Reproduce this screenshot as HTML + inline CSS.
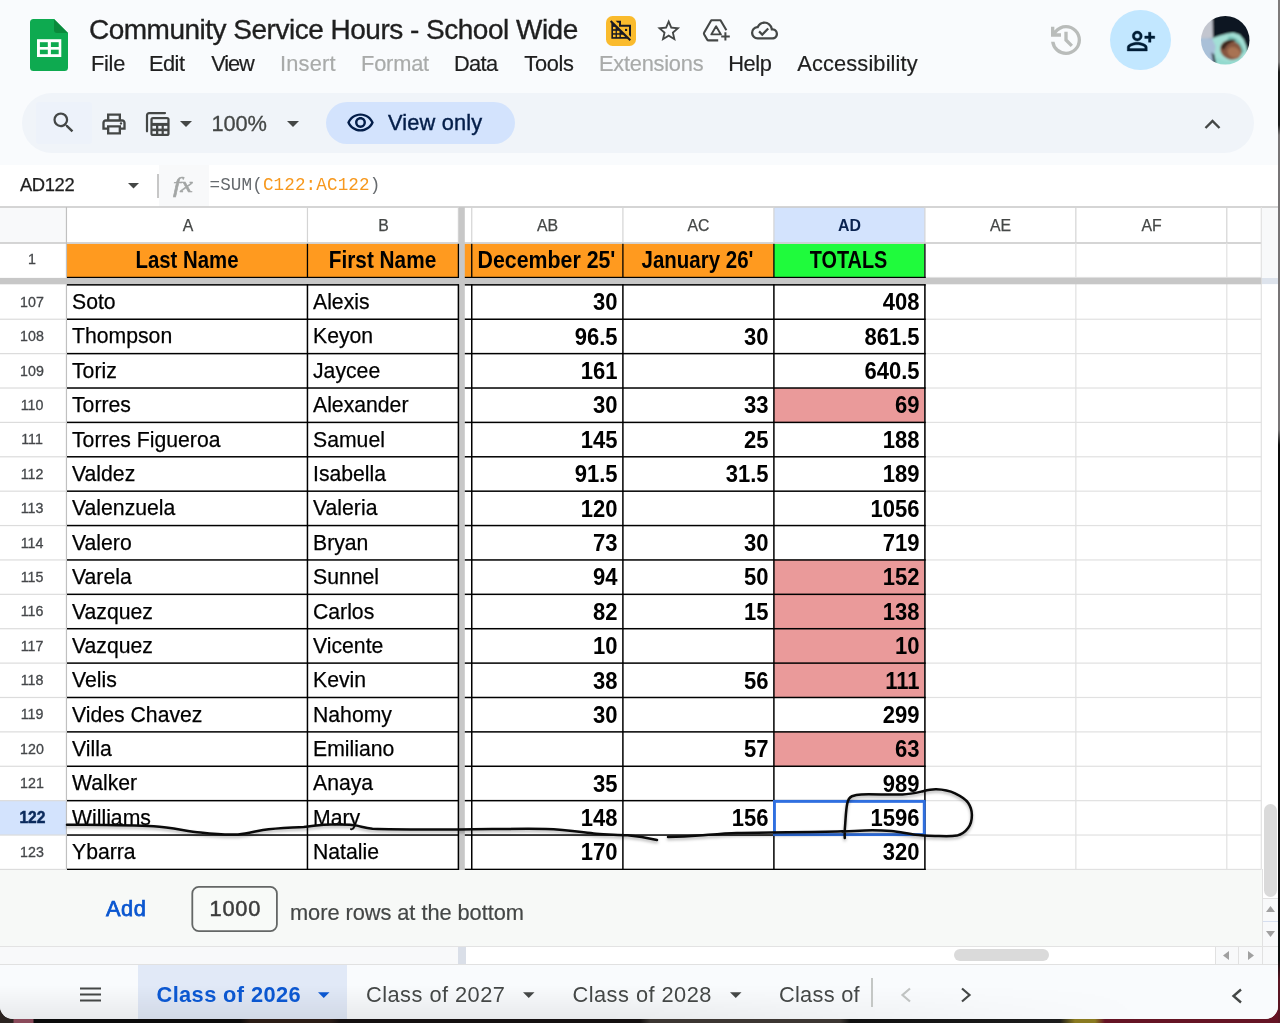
<!DOCTYPE html>
<html lang="en"><head><meta charset="utf-8"><title>Community Service Hours - School Wide</title>
<style>
*{box-sizing:border-box;margin:0;padding:0}
html,body{width:1280px;height:1023px;overflow:hidden;background:#0c0b0b}
body{background:linear-gradient(90deg,#2b2320 0,#2b2320 13px,#8a4a5a 14px,#8a4a5a 33px,#0b0b0b 34px,#0b0b0b 240px,#2a1c16 250px,#2a1c16 330px,#141010 340px,#141010 640px,#3c3632 650px,#3c3632 840px,#101010 850px,#1c1c1c 1060px,#8a7a20 1075px,#8a7a20 1095px,#651424 1105px,#651424 1280px)}
body{font-family:"Liberation Sans",sans-serif;color:#1f1f1f;position:relative}
.abs,.abs *{position:absolute}
#win{will-change:transform;position:absolute;left:0;top:0;width:1278px;height:1019px;background:#f9fbfd;border-radius:0 0 13px 13px;overflow:hidden}
#edge{position:absolute;left:1278px;top:0;width:2px;height:1023px;background:linear-gradient(180deg,#7d7a7a 0,#7d7a7a 62px,#1a1a1a 72px,#1a1a1a 125px,#777475 135px,#777475 430px,#0c0c0c 445px,#0c0c0c 960px,#5a1522 980px,#5a1522 1023px)}
.t{position:absolute;white-space:nowrap;line-height:1}
.menu{font-size:21.8px;top:53.2px;color:#1f1f1f;-webkit-text-stroke:0.200px}
.menu.dis{color:#a9abaa}
.ln{position:absolute;background:#e1e1e1}
.bk{position:absolute;background:#000}
.cell{position:absolute;white-space:nowrap;line-height:1;font-size:22.8px;color:#000;transform-origin:0 0}
.nm{transform:scaleX(0.93);-webkit-text-stroke:0.250px #000}
.num{text-align:right;font-weight:bold;font-size:24.2px;transform:scaleX(0.91);transform-origin:100% 0}
.rh{position:absolute;left:-1.4px;width:66px;text-align:center;font-size:14.8px;color:#44474a;line-height:1;transform:scaleX(0.962);-webkit-text-stroke:0.300px}
.ch{position:absolute;top:216.6px;margin-left:0.7px;text-align:center;font-size:16.4px;color:#444746;line-height:1;transform:scaleX(0.965);-webkit-text-stroke:0.250px}
.hd{position:absolute;top:249.3px;text-align:center;font-weight:bold;font-size:23.2px;color:#000;line-height:1;white-space:nowrap}
svg{position:absolute;overflow:visible}
</style></head><body>
<div id="win">
<!-- sheets logo -->
<svg style="left:30.300px;top:19px" width="38" height="52" viewBox="0 0 38 52">
<path d="M3.500 0H24L38 14V48.500a3.500 3.500 0 0 1-3.500 3.500H3.500a3.500 3.500 0 0 1-3.500-3.500V3.500a3.500 3.500 0 0 1 3.500-3.500z" fill="#0eaa50"/>
<path d="M24 0L38 14H27a3 3 0 0 1-3-3z" fill="#0a8a3c"/>
<path d="M7 20.200h24.300v17.800H7z" fill="#fff"/>
<g fill="#0eaa50"><rect x="9.900" y="23.200" width="7.900" height="4.800"/><rect x="20.900" y="23.200" width="7.800" height="4.800"/><rect x="9.900" y="30.700" width="7.900" height="4.500"/><rect x="20.900" y="30.700" width="7.800" height="4.500"/></g>
</svg>
<div class="t" id="title" style="left:89px;top:16.3px;font-size:28px;color:#1f1f1f;letter-spacing:-0.5px;-webkit-text-stroke:0.350px #1f1f1f">Community Service Hours - School Wide</div>
<div class="t menu" id="m1" style="left:91px;letter-spacing:-0.27px">File</div>
<div class="t menu" id="m2" style="left:149px;letter-spacing:-0.53px">Edit</div>
<div class="t menu" id="m3" style="left:211.3px;letter-spacing:-1.17px">View</div>
<div class="t menu dis" id="m4" style="left:280px;letter-spacing:0.22px">Insert</div>
<div class="t menu dis" id="m5" style="left:361px;letter-spacing:-0.17px">Format</div>
<div class="t menu" id="m6" style="left:454px;letter-spacing:-0.68px">Data</div>
<div class="t menu" id="m7" style="left:524.3px;letter-spacing:-0.3px">Tools</div>
<div class="t menu dis" id="m8" style="left:599px;letter-spacing:-0.23px">Extensions</div>
<div class="t menu" id="m9" style="left:728.2px;letter-spacing:-0.37px">Help</div>
<div class="t menu" id="m10" style="left:797.3px;letter-spacing:0.14px">Accessibility</div>
<!-- external badge -->
<div style="position:absolute;left:605.600px;top:15.600px;width:30px;height:30px;border-radius:6.500px;background:#fabb2d"></div>
<svg style="left:602px;top:12px" width="38" height="38" viewBox="0 0 38 38">
<path d="M9.400 10.200V26.700H26.100z" fill="#191a24"/>
<g fill="#fbbc2c"><rect x="11" y="14.900" width="2.600" height="2.300"/><rect x="11" y="18.800" width="2.600" height="2.400"/><rect x="14.900" y="18.800" width="2.600" height="2.400"/><rect x="11" y="22.700" width="2.600" height="2.400"/><rect x="14.900" y="22.700" width="2.600" height="2.400"/><path d="M18.900 22.700H21.300L23.400 25.100H18.900z"/></g>
<path d="M8.700 8.900L28.300 28.300" stroke="#191a24" stroke-width="2.100" fill="none"/>
<path d="M13.700 8.800H19V12.700H29V24.900L27 23V14.700H17V10.800H15.700z" fill="#191a24"/>
<rect x="23" y="16.900" width="2.100" height="2.100" fill="#191a24"/>
</svg>
<!-- star -->
<svg style="left:654.800px;top:16.900px" width="27.400" height="27.400" viewBox="0 0 24 24" fill="#444746">
<path d="M22 9.24l-7.19-.62L12 2 9.19 8.63 2 9.24l5.46 4.73L5.82 21 12 17.27 18.18 21l-1.63-7.03L22 9.24zM12 15.4l-3.76 2.27 1-4.28-3.32-2.88 4.38-.38L12 6.100l1.710 4.040 4.380.380-3.320 2.880 1 4.280L12 15.400z"/>
</svg>
<!-- drive add -->
<svg style="left:700px;top:15px" width="34" height="30" viewBox="700 15 34 30" fill="none" stroke="#444746" stroke-width="2.100" stroke-linejoin="round" stroke-linecap="butt">
<path d="M726.400 30.200L720.500 20.200H711.300L704.200 32.600a2 2 0 0 0 0 2L707.200 39.600a1.600 1.600 0 0 0 1.400 .8H718.200"/>
<path d="M716.100 26.200L711.300 34.400H720.900z" stroke-width="1.900"/>
<path d="M725.400 32.200v8.400M721.200 36.400h8.600" stroke-width="2"/>
</svg>
<!-- cloud done -->
<svg style="left:750.700px;top:17.400px" width="27" height="27" viewBox="0 0 24 24" fill="#444746">
<path d="M19.35 10.04A7.49 7.49 0 0 0 12 4C9.11 4 6.6 5.64 5.35 8.04A5.994 5.994 0 0 0 0 14c0 3.31 2.69 6 6 6h13c2.76 0 5-2.24 5-5 0-2.64-2.05-4.78-4.65-4.96zM19 18H6c-2.21 0-4-1.790-4-4 0-2.050 1.530-3.760 3.560-3.970l1.070-.11.5-.95A5.469 5.469 0 0 1 12 6c2.620 0 4.880 1.860 5.390 4.430l.3 1.5 1.530.11A2.980 2.980 0 0 1 22 15c0 1.650-1.350 3-3 3zm-9-3.820l-2.090-2.090L6.500 13.500 10 17l6.010-6.010-1.410-1.410z"/>
</svg>
<!-- history -->
<svg style="left:1045.900px;top:19.800px" width="40" height="40" viewBox="0 -960 960 960" fill="#b9bcba">
<path d="M480-120q-138 0-240.500-91.500T122-440h82q14 104 92.500 172T480-200q117 0 198.500-81.500T760-480q0-117-81.500-198.500T480-760q-69 0-129 32t-101 88h110v80H120v-240h80v94q51-64 124.500-99T480-840q75 0 140.500 28.500t114 77q48.500 48.500 77 114T840-480q0 75-28.500 140.500t-77 114q-48.500 48.500-114 77T480-120Zm112-192L440-464v-216h80v184l128 128-56 56Z"/>
</svg>
<!-- share -->
<div style="position:absolute;left:1109.500px;top:9.800px;width:61px;height:60.500px;border-radius:50%;background:#c2e7ff"></div>
<svg style="left:1126px;top:26.300px" width="30" height="30" viewBox="0 0 24 24" fill="#001d35" stroke="#001d35" stroke-width="0.300">
<path d="M9 4a4 4 0 1 0 0 8 4 4 0 0 0 0-8zm0 2a2 2 0 1 1 0 4 2 2 0 0 1 0-4zm0 7c-2.670 0-8 1.340-8 4v3h16v-3c0-2.660-5.330-4-8-4zm6 5H3v-.990C3.200 16.290 6.300 15 9 15s5.800 1.290 6 2zM20 5h-2v3h-3v2h3v3h2v-3h3V8h-3z"/>
</svg>
<!-- avatar -->
<svg style="left:1200.500px;top:16px" width="48.500" height="48.500" viewBox="0 0 48 48">
<defs><clipPath id="av"><circle cx="24" cy="24" r="24"/></clipPath><filter id="bl" x="-10%" y="-10%" width="120%" height="120%"><feGaussianBlur stdDeviation="0.900"/></filter></defs>
<g clip-path="url(#av)"><g filter="url(#bl)">
<rect x="-3" y="-3" width="54" height="54" fill="#0c1322"/>
<path d="M-2 3L11.500 3L11.800 22L-2 24z" fill="#c3c6cf"/>
<path d="M11 22L19 19.300L26.300 17.300L32.200 16.600L38.200 18.600L42.200 23.300L44.900 29.900L46 36L44 50L14 50L10 34z" fill="#a3e0d6"/>
<path d="M-2 22L11 22L14.500 30L12 46L-2 46z" fill="#a9c0d8"/>
<path d="M27 20.500C33 19.500 39.500 24 43 35L40.500 38C38 30 33 25.500 26 24z" fill="#73c0b6"/>
<ellipse cx="29.600" cy="33.600" rx="11" ry="9.300" transform="rotate(25 29.600 33.600)" fill="#875740"/>
<ellipse cx="32.500" cy="36" rx="6.500" ry="5" transform="rotate(25 32.500 36)" fill="#a97352"/>
<path d="M19.500 31C22 24.500 29 22 35 24C30 25.500 25 28.500 22.500 34z" fill="#3a261d"/>
<path d="M15 41C20 43 26 45.800 33 44.800L41 40.500L40 50L12 50z" fill="#93d9ce"/>
<path d="M10.300 36L12.500 50L15.500 50L13.300 38z" fill="#2d3a4a"/>
</g></g></svg>
<div style="position:absolute;left:22px;top:92.500px;width:1232px;height:60px;border-radius:30px;background:#f0f4f9"></div>
<div style="position:absolute;left:36.200px;top:102px;width:55.700px;height:41.800px;border-radius:3px;background:#edf2fa"></div>
<!-- search -->
<svg style="left:49.600px;top:108.700px" width="27.300" height="27.300" viewBox="0 0 24 24" fill="#444746">
<path d="M15.500 14h-.790l-.280-.270A6.471 6.471 0 0 0 16 9.500 6.500 6.500 0 1 0 9.500 16c1.610 0 3.090-.590 4.230-1.570l.270.280v.790l5 4.990L20.490 19zm-6 0C7.010 14 5 11.990 5 9.500S7.010 5 9.500 5 14 7.010 14 9.500 11.990 14 9.500 14z"/>
</svg>
<!-- print -->
<svg style="left:99.800px;top:110.300px" width="28" height="28" viewBox="0 0 24 24" fill="#444746">
<path d="M19 8h-1V3H6v5H5c-1.660 0-3 1.340-3 3v6h4v4h12v-4h4v-6c0-1.660-1.340-3-3-3zM8 5h8v3H8zm8 14H8v-4h8zm2-4v-2H6v2H4v-4c0-.550.450-1 1-1h14c.550 0 1 .450 1 1v4z"/><circle cx="18" cy="11.500" r="1"/>
</svg>
<!-- calc sheet -->
<svg style="left:145px;top:111px" width="26" height="26" viewBox="0 0 26 26">
<path d="M20 2.100H4.200a2.200 2.200 0 0 0-2.200 2.200V20.300" fill="none" stroke="#444746" stroke-width="2.200" stroke-linecap="round"/>
<rect x="5.400" y="6" width="19.200" height="19" rx="2.600" fill="#444746"/>
<g fill="#f0f4f9"><rect x="7.700" y="8.200" width="14.600" height="3.700"/>
<rect x="7.500" y="14.900" width="3.500" height="2.700"/><rect x="13.300" y="14.900" width="3.300" height="2.700"/><rect x="18.800" y="14.900" width="3.500" height="2.700"/>
<rect x="7.500" y="20.200" width="3.500" height="2.600"/><rect x="13.300" y="20.200" width="3.300" height="2.600"/><rect x="18.800" y="20.200" width="3.500" height="2.600"/></g>
</svg>
<svg style="left:179.500px;top:120.500px" width="12" height="6" viewBox="0 0 12 6"><path d="M0 0h12L6 6z" fill="#444746"/></svg>
<div class="t" id="zoom" style="left:211.5px;top:113.300px;font-size:21.8px;letter-spacing:-0.15px;color:#444746;-webkit-text-stroke:0.300px">100%</div>
<svg style="left:287px;top:120.500px" width="12" height="6" viewBox="0 0 12 6"><path d="M0 0h12L6 6z" fill="#444746"/></svg>
<div style="position:absolute;left:326px;top:101.500px;width:189px;height:42px;border-radius:21px;background:#d3e3fd"></div>
<svg style="left:346px;top:108px" width="29" height="29" viewBox="0 0 24 24" fill="#041e49">
<path d="M12 6.500c3.790 0 7.170 2.130 8.820 5.500-1.650 3.370-5.020 5.500-8.820 5.500S4.830 15.370 3.180 12C4.830 8.630 8.210 6.500 12 6.500m0-2C7 4.500 2.730 7.610 1 12c1.730 4.390 6 7.500 11 7.500s9.270-3.110 11-7.500c-1.730-4.390-6-7.500-11-7.500zm0 5a2.500 2.500 0 0 1 0 5 2.500 2.500 0 0 1 0-5m0-2c-2.480 0-4.500 2.020-4.500 4.500s2.020 4.500 4.500 4.500 4.500-2.020 4.500-4.500-2.020-4.500-4.500-4.500z"/>
</svg>
<div class="t" id="vo" style="left:388px;top:112.200px;font-size:21.8px;letter-spacing:0.15px;color:#041e49;font-weight:normal;-webkit-text-stroke:0.400px #041e49">View only</div>
<svg style="left:1204px;top:118px" width="17" height="12" viewBox="0 0 17 12" fill="none" stroke="#444746" stroke-width="2.400"><path d="M1.500 10L8.500 3L15.500 10"/></svg>
<div style="position:absolute;left:0;top:164.500px;width:1278px;height:43px;background:#fff"></div>
<div style="position:absolute;left:159px;top:164.500px;width:50px;height:43px;background:#f8f9fa"></div>
<div class="t" id="cellref" style="left:20px;top:176.300px;font-size:18.400px;color:#1f1f1f;letter-spacing:-0.400px;-webkit-text-stroke:0.250px">AD122</div>
<svg style="left:127.500px;top:182.500px" width="11" height="5.500" viewBox="0 0 12 6"><path d="M0 0h12L6 6z" fill="#444746"/></svg>
<div style="position:absolute;left:157px;top:174px;width:1.500px;height:24px;background:#c7c7c7"></div>
<div class="t" id="fx" style="left:173px;top:174.500px;font-size:21px;font-style:italic;font-family:'Liberation Serif',serif;color:#a3a6a5;-webkit-text-stroke:0.5px #a3a6a5;letter-spacing:-0.5px;transform:scaleX(1.35);transform-origin:0 0">fx</div>
<div class="t" id="formula" style="left:209.500px;top:176.500px;font-size:17.600px;letter-spacing:0.120px;font-family:'Liberation Mono',monospace;color:#666a6e">=SUM(<span style="color:#f7981d;position:static">C122:AC122</span>)</div>
<!-- grid -->
<svg style="left:0;top:0" width="1278" height="1019" viewBox="0 0 1278 1019">
<rect x="0.00" y="207.00" width="1261.30" height="662.43" fill="#fff"/>
<rect x="0.00" y="207.00" width="66.45" height="36.00" fill="#f8f9fa"/>
<rect x="1261.30" y="207.00" width="16.70" height="71.00" fill="#f8f9fa"/>
<rect x="1261.30" y="278.00" width="16.70" height="6.30" fill="#dde3ec"/>
<rect x="1261.30" y="284.30" width="16.70" height="661.70" fill="#fff"/>
<rect x="773.90" y="207.00" width="151.00" height="36.00" fill="#d3e3fd"/>
<rect x="0.00" y="800.66" width="66.45" height="34.39" fill="#d3e3fd"/>
<rect x="67.00" y="243.80" width="706.90" height="33.60" fill="#ff9a1f"/>
<rect x="773.90" y="243.80" width="151.00" height="33.60" fill="#1ffb3c"/>
<rect x="773.90" y="388.01" width="151.00" height="34.39" fill="#ea9a9a"/>
<rect x="773.90" y="559.95" width="151.00" height="34.39" fill="#ea9a9a"/>
<rect x="773.90" y="594.33" width="151.00" height="34.39" fill="#ea9a9a"/>
<rect x="773.90" y="628.72" width="151.00" height="34.39" fill="#ea9a9a"/>
<rect x="773.90" y="663.11" width="151.00" height="34.39" fill="#ea9a9a"/>
<rect x="773.90" y="731.88" width="151.00" height="34.39" fill="#ea9a9a"/>
<rect x="0.00" y="206.20" width="1278.00" height="1.60" fill="#cbcbcb"/>
<rect x="0.00" y="242.20" width="1261.30" height="1.60" fill="#cbcbcb"/>
<rect x="65.85" y="207.00" width="1.20" height="662.43" fill="#c0c0c0"/>
<rect x="306.85" y="207.00" width="1.20" height="36.00" fill="#d4d4d4"/>
<rect x="457.80" y="207.00" width="1.20" height="36.00" fill="#d4d4d4"/>
<rect x="471.15" y="207.00" width="1.20" height="36.00" fill="#d4d4d4"/>
<rect x="622.30" y="207.00" width="1.20" height="36.00" fill="#d4d4d4"/>
<rect x="773.30" y="207.00" width="1.20" height="36.00" fill="#d4d4d4"/>
<rect x="924.30" y="207.00" width="1.20" height="36.00" fill="#d4d4d4"/>
<rect x="1075.25" y="207.00" width="1.20" height="36.00" fill="#d4d4d4"/>
<rect x="1226.20" y="207.00" width="1.20" height="36.00" fill="#d4d4d4"/>
<rect x="924.30" y="243.00" width="1.20" height="626.43" fill="#e1e1e1"/>
<rect x="1075.25" y="243.00" width="1.20" height="626.43" fill="#e1e1e1"/>
<rect x="1226.20" y="243.00" width="1.20" height="626.43" fill="#e1e1e1"/>
<rect x="1260.70" y="207.00" width="1.20" height="662.43" fill="#e1e1e1"/>
<rect x="0.00" y="318.64" width="66.45" height="1.20" fill="#dcdcdc"/>
<rect x="924.90" y="318.64" width="336.40" height="1.20" fill="#e1e1e1"/>
<rect x="0.00" y="353.02" width="66.45" height="1.20" fill="#dcdcdc"/>
<rect x="924.90" y="353.02" width="336.40" height="1.20" fill="#e1e1e1"/>
<rect x="0.00" y="387.41" width="66.45" height="1.20" fill="#dcdcdc"/>
<rect x="924.90" y="387.41" width="336.40" height="1.20" fill="#e1e1e1"/>
<rect x="0.00" y="421.80" width="66.45" height="1.20" fill="#dcdcdc"/>
<rect x="924.90" y="421.80" width="336.40" height="1.20" fill="#e1e1e1"/>
<rect x="0.00" y="456.19" width="66.45" height="1.20" fill="#dcdcdc"/>
<rect x="924.90" y="456.19" width="336.40" height="1.20" fill="#e1e1e1"/>
<rect x="0.00" y="490.57" width="66.45" height="1.20" fill="#dcdcdc"/>
<rect x="924.90" y="490.57" width="336.40" height="1.20" fill="#e1e1e1"/>
<rect x="0.00" y="524.96" width="66.45" height="1.20" fill="#dcdcdc"/>
<rect x="924.90" y="524.96" width="336.40" height="1.20" fill="#e1e1e1"/>
<rect x="0.00" y="559.35" width="66.45" height="1.20" fill="#dcdcdc"/>
<rect x="924.90" y="559.35" width="336.40" height="1.20" fill="#e1e1e1"/>
<rect x="0.00" y="593.73" width="66.45" height="1.20" fill="#dcdcdc"/>
<rect x="924.90" y="593.73" width="336.40" height="1.20" fill="#e1e1e1"/>
<rect x="0.00" y="628.12" width="66.45" height="1.20" fill="#dcdcdc"/>
<rect x="924.90" y="628.12" width="336.40" height="1.20" fill="#e1e1e1"/>
<rect x="0.00" y="662.51" width="66.45" height="1.20" fill="#dcdcdc"/>
<rect x="924.90" y="662.51" width="336.40" height="1.20" fill="#e1e1e1"/>
<rect x="0.00" y="696.89" width="66.45" height="1.20" fill="#dcdcdc"/>
<rect x="924.90" y="696.89" width="336.40" height="1.20" fill="#e1e1e1"/>
<rect x="0.00" y="731.28" width="66.45" height="1.20" fill="#dcdcdc"/>
<rect x="924.90" y="731.28" width="336.40" height="1.20" fill="#e1e1e1"/>
<rect x="0.00" y="765.67" width="66.45" height="1.20" fill="#dcdcdc"/>
<rect x="924.90" y="765.67" width="336.40" height="1.20" fill="#e1e1e1"/>
<rect x="0.00" y="800.06" width="66.45" height="1.20" fill="#dcdcdc"/>
<rect x="924.90" y="800.06" width="336.40" height="1.20" fill="#e1e1e1"/>
<rect x="0.00" y="834.44" width="66.45" height="1.20" fill="#dcdcdc"/>
<rect x="924.90" y="834.44" width="336.40" height="1.20" fill="#e1e1e1"/>
<rect x="0.00" y="868.83" width="66.45" height="1.20" fill="#dcdcdc"/>
<rect x="924.90" y="868.83" width="336.40" height="1.20" fill="#e1e1e1"/>
<rect x="924.90" y="276.90" width="336.40" height="1.00" fill="#e1e1e1"/>
<rect x="0.00" y="277.90" width="1261.30" height="6.40" fill="#c7c7c7"/>
<rect x="458.90" y="207.00" width="5.90" height="663.03" fill="#c7c7c7"/>
<rect x="67.00" y="276.80" width="391.90" height="1.20" fill="#000"/>
<rect x="67.00" y="284.10" width="391.90" height="1.50" fill="#000"/>
<rect x="67.00" y="318.49" width="391.90" height="1.50" fill="#000"/>
<rect x="67.00" y="352.87" width="391.90" height="1.50" fill="#000"/>
<rect x="67.00" y="387.26" width="391.90" height="1.50" fill="#000"/>
<rect x="67.00" y="421.65" width="391.90" height="1.50" fill="#000"/>
<rect x="67.00" y="456.04" width="391.90" height="1.50" fill="#000"/>
<rect x="67.00" y="490.42" width="391.90" height="1.50" fill="#000"/>
<rect x="67.00" y="524.81" width="391.90" height="1.50" fill="#000"/>
<rect x="67.00" y="559.20" width="391.90" height="1.50" fill="#000"/>
<rect x="67.00" y="593.58" width="391.90" height="1.50" fill="#000"/>
<rect x="67.00" y="627.97" width="391.90" height="1.50" fill="#000"/>
<rect x="67.00" y="662.36" width="391.90" height="1.50" fill="#000"/>
<rect x="67.00" y="696.74" width="391.90" height="1.50" fill="#000"/>
<rect x="67.00" y="731.13" width="391.90" height="1.50" fill="#000"/>
<rect x="67.00" y="765.52" width="391.90" height="1.50" fill="#000"/>
<rect x="67.00" y="799.91" width="391.90" height="1.50" fill="#000"/>
<rect x="67.00" y="834.29" width="391.90" height="1.50" fill="#000"/>
<rect x="67.00" y="868.68" width="391.90" height="1.50" fill="#000"/>
<rect x="464.80" y="276.80" width="460.85" height="1.20" fill="#000"/>
<rect x="464.80" y="284.10" width="460.85" height="1.50" fill="#000"/>
<rect x="464.80" y="318.49" width="460.85" height="1.50" fill="#000"/>
<rect x="464.80" y="352.87" width="460.85" height="1.50" fill="#000"/>
<rect x="464.80" y="387.26" width="460.85" height="1.50" fill="#000"/>
<rect x="464.80" y="421.65" width="460.85" height="1.50" fill="#000"/>
<rect x="464.80" y="456.04" width="460.85" height="1.50" fill="#000"/>
<rect x="464.80" y="490.42" width="460.85" height="1.50" fill="#000"/>
<rect x="464.80" y="524.81" width="460.85" height="1.50" fill="#000"/>
<rect x="464.80" y="559.20" width="460.85" height="1.50" fill="#000"/>
<rect x="464.80" y="593.58" width="460.85" height="1.50" fill="#000"/>
<rect x="464.80" y="627.97" width="460.85" height="1.50" fill="#000"/>
<rect x="464.80" y="662.36" width="460.85" height="1.50" fill="#000"/>
<rect x="464.80" y="696.74" width="460.85" height="1.50" fill="#000"/>
<rect x="464.80" y="731.13" width="460.85" height="1.50" fill="#000"/>
<rect x="464.80" y="765.52" width="460.85" height="1.50" fill="#000"/>
<rect x="464.80" y="799.91" width="460.85" height="1.50" fill="#000"/>
<rect x="464.80" y="834.29" width="460.85" height="1.50" fill="#000"/>
<rect x="464.80" y="868.68" width="460.85" height="1.50" fill="#000"/>
<rect x="306.80" y="243.80" width="1.30" height="34.20" fill="#000"/>
<rect x="306.70" y="284.30" width="1.50" height="585.88" fill="#000"/>
<rect x="457.75" y="243.80" width="1.30" height="34.20" fill="#000"/>
<rect x="457.65" y="284.30" width="1.50" height="585.88" fill="#000"/>
<rect x="471.10" y="243.80" width="1.30" height="34.20" fill="#000"/>
<rect x="471.00" y="284.30" width="1.50" height="585.88" fill="#000"/>
<rect x="622.25" y="243.80" width="1.30" height="34.20" fill="#000"/>
<rect x="622.15" y="284.30" width="1.50" height="585.88" fill="#000"/>
<rect x="773.25" y="243.80" width="1.30" height="34.20" fill="#000"/>
<rect x="773.15" y="284.30" width="1.50" height="585.88" fill="#000"/>
<rect x="924.25" y="243.80" width="1.30" height="34.20" fill="#000"/>
<rect x="924.15" y="284.30" width="1.50" height="585.88" fill="#000"/>
</svg>
<div class="ch" style="left:67px;width:240px;">A</div>
<div class="ch" style="left:307px;width:151px;">B</div>
<div class="ch" style="left:471px;width:151px;">AB</div>
<div class="ch" style="left:622px;width:151px;">AC</div>
<div class="ch" style="left:773px;width:151px;font-weight:bold;color:#0a2350;transform:scaleX(0.97);-webkit-text-stroke:0">AD</div>
<div class="ch" style="left:924px;width:151px;">AE</div>
<div class="ch" style="left:1075px;width:151px;">AF</div>
<div class="rh" style="top:252.4px">1</div>
<div class="hd" id="h1" style="left:67px;width:240px;transform:scaleX(0.879)">Last Name</div>
<div class="hd" id="h2" style="left:307px;width:151px;transform:scaleX(0.896)">First Name</div>
<div class="hd" id="h3" style="left:471px;width:151px;transform:scaleX(0.92)">December 25'</div>
<div class="hd" id="h4" style="left:622px;width:151px;transform:scaleX(0.883)">January 26'</div>
<div class="hd" id="h5" style="left:773px;width:151px;transform:scaleX(0.855)">TOTALS</div>
<div class="rh" style="top:294.80px">107</div>
<div class="cell nm" style="left:72.3px;top:290.05px">Soto</div>
<div class="cell nm" style="left:312.5px;top:290.05px">Alexis</div>
<div class="cell num" style="left:471px;width:146.5px;top:290.25px">30</div>
<div class="cell num" style="left:773px;width:146.5px;top:290.25px">408</div>
<div class="rh" style="top:329.19px">108</div>
<div class="cell nm" style="left:72.3px;top:324.44px">Thompson</div>
<div class="cell nm" style="left:312.5px;top:324.44px">Keyon</div>
<div class="cell num" style="left:471px;width:146.5px;top:324.64px">96.5</div>
<div class="cell num" style="left:622px;width:146.5px;top:324.64px">30</div>
<div class="cell num" style="left:773px;width:146.5px;top:324.64px">861.5</div>
<div class="rh" style="top:363.57px">109</div>
<div class="cell nm" style="left:72.3px;top:358.82px">Toriz</div>
<div class="cell nm" style="left:312.5px;top:358.82px">Jaycee</div>
<div class="cell num" style="left:471px;width:146.5px;top:359.02px">161</div>
<div class="cell num" style="left:773px;width:146.5px;top:359.02px">640.5</div>
<div class="rh" style="top:397.96px">110</div>
<div class="cell nm" style="left:72.3px;top:393.21px">Torres</div>
<div class="cell nm" style="left:312.5px;top:393.21px">Alexander</div>
<div class="cell num" style="left:471px;width:146.5px;top:393.41px">30</div>
<div class="cell num" style="left:622px;width:146.5px;top:393.41px">33</div>
<div class="cell num" style="left:773px;width:146.5px;top:393.41px">69</div>
<div class="rh" style="top:432.35px">111</div>
<div class="cell nm" style="left:72.3px;top:427.60px">Torres Figueroa</div>
<div class="cell nm" style="left:312.5px;top:427.60px">Samuel</div>
<div class="cell num" style="left:471px;width:146.5px;top:427.80px">145</div>
<div class="cell num" style="left:622px;width:146.5px;top:427.80px">25</div>
<div class="cell num" style="left:773px;width:146.5px;top:427.80px">188</div>
<div class="rh" style="top:466.74px">112</div>
<div class="cell nm" style="left:72.3px;top:461.99px">Valdez</div>
<div class="cell nm" style="left:312.5px;top:461.99px">Isabella</div>
<div class="cell num" style="left:471px;width:146.5px;top:462.19px">91.5</div>
<div class="cell num" style="left:622px;width:146.5px;top:462.19px">31.5</div>
<div class="cell num" style="left:773px;width:146.5px;top:462.19px">189</div>
<div class="rh" style="top:501.12px">113</div>
<div class="cell nm" style="left:72.3px;top:496.37px">Valenzuela</div>
<div class="cell nm" style="left:312.5px;top:496.37px">Valeria</div>
<div class="cell num" style="left:471px;width:146.5px;top:496.57px">120</div>
<div class="cell num" style="left:773px;width:146.5px;top:496.57px">1056</div>
<div class="rh" style="top:535.51px">114</div>
<div class="cell nm" style="left:72.3px;top:530.76px">Valero</div>
<div class="cell nm" style="left:312.5px;top:530.76px">Bryan</div>
<div class="cell num" style="left:471px;width:146.5px;top:530.96px">73</div>
<div class="cell num" style="left:622px;width:146.5px;top:530.96px">30</div>
<div class="cell num" style="left:773px;width:146.5px;top:530.96px">719</div>
<div class="rh" style="top:569.90px">115</div>
<div class="cell nm" style="left:72.3px;top:565.15px">Varela</div>
<div class="cell nm" style="left:312.5px;top:565.15px">Sunnel</div>
<div class="cell num" style="left:471px;width:146.5px;top:565.35px">94</div>
<div class="cell num" style="left:622px;width:146.5px;top:565.35px">50</div>
<div class="cell num" style="left:773px;width:146.5px;top:565.35px">152</div>
<div class="rh" style="top:604.28px">116</div>
<div class="cell nm" style="left:72.3px;top:599.53px">Vazquez</div>
<div class="cell nm" style="left:312.5px;top:599.53px">Carlos</div>
<div class="cell num" style="left:471px;width:146.5px;top:599.73px">82</div>
<div class="cell num" style="left:622px;width:146.5px;top:599.73px">15</div>
<div class="cell num" style="left:773px;width:146.5px;top:599.73px">138</div>
<div class="rh" style="top:638.67px">117</div>
<div class="cell nm" style="left:72.3px;top:633.92px">Vazquez</div>
<div class="cell nm" style="left:312.5px;top:633.92px">Vicente</div>
<div class="cell num" style="left:471px;width:146.5px;top:634.12px">10</div>
<div class="cell num" style="left:773px;width:146.5px;top:634.12px">10</div>
<div class="rh" style="top:673.06px">118</div>
<div class="cell nm" style="left:72.3px;top:668.31px">Velis</div>
<div class="cell nm" style="left:312.5px;top:668.31px">Kevin</div>
<div class="cell num" style="left:471px;width:146.5px;top:668.51px">38</div>
<div class="cell num" style="left:622px;width:146.5px;top:668.51px">56</div>
<div class="cell num" style="left:773px;width:146.5px;top:668.51px">111</div>
<div class="rh" style="top:707.44px">119</div>
<div class="cell nm" style="left:72.3px;top:702.69px">Vides Chavez</div>
<div class="cell nm" style="left:312.5px;top:702.69px">Nahomy</div>
<div class="cell num" style="left:471px;width:146.5px;top:702.89px">30</div>
<div class="cell num" style="left:773px;width:146.5px;top:702.89px">299</div>
<div class="rh" style="top:741.83px">120</div>
<div class="cell nm" style="left:72.3px;top:737.08px">Villa</div>
<div class="cell nm" style="left:312.5px;top:737.08px">Emiliano</div>
<div class="cell num" style="left:622px;width:146.5px;top:737.28px">57</div>
<div class="cell num" style="left:773px;width:146.5px;top:737.28px">63</div>
<div class="rh" style="top:776.22px">121</div>
<div class="cell nm" style="left:72.3px;top:771.47px">Walker</div>
<div class="cell nm" style="left:312.5px;top:771.47px">Anaya</div>
<div class="cell num" style="left:471px;width:146.5px;top:771.67px">35</div>
<div class="cell num" style="left:773px;width:146.5px;top:771.67px">989</div>
<div class="rh" style="top:810.46px;left:-0.6px;font-weight:bold;font-size:15.6px;color:#0b2a5c;transform:scaleX(1.0);-webkit-text-stroke:0.5px #0b2a5c">122</div>
<div class="cell nm" style="left:72.3px;top:805.86px">Williams</div>
<div class="cell nm" style="left:312.5px;top:805.86px">Mary</div>
<div class="cell num" style="left:471px;width:146.5px;top:806.06px">148</div>
<div class="cell num" style="left:622px;width:146.5px;top:806.06px">156</div>
<div class="cell num" style="left:773px;width:146.5px;top:806.06px">1596</div>
<div class="rh" style="top:844.99px">123</div>
<div class="cell nm" style="left:72.3px;top:840.24px">Ybarra</div>
<div class="cell nm" style="left:312.5px;top:840.24px">Natalie</div>
<div class="cell num" style="left:471px;width:146.5px;top:840.44px">170</div>
<div class="cell num" style="left:773px;width:146.5px;top:840.44px">320</div>
<svg style="left:0;top:0" width="1278" height="1019" viewBox="0 0 1278 1019"><rect x="774.45" y="801.4" width="149.8" height="33.2" fill="none" stroke="#2f6fe0" stroke-width="2.9"/></svg>
<svg style="left:0;top:0" width="1278" height="1019" viewBox="0 0 1278 1019" fill="none" stroke="#0a0a0a" stroke-width="2.500" stroke-linecap="round" stroke-linejoin="round" filter="drop-shadow(0px 2.500px 1.800px rgba(0,0,0,0.300))">
<path d="M67 824.700C100 825 130 825 153.750 826.250C172 827.500 186 831 200.600 832.500C214 834 226 835 238 834.400C248 833.500 254 831.500 263 830C277 828 290 827.800 303.750 826.900C314 826 322 824.300 332 824.400C342 824.500 350 824 357 825.600C363 827 366 828.200 372.500 828.750C400 829.800 430 829.400 460 829.400C490 829.300 520 828.500 546 829C565 829.500 580 832 596 833.750C607 834.800 617 834.500 627.500 835.300C638 836.200 648 838 657 840"/>
<path d="M668 836.900C679 836.800 689 836.400 699 835.600C712 834.600 724 833.400 737 833C770 832 805 832.300 842.500 831.200"/>
<path d="M844.750 837.900C844.500 832 844.800 828 845.300 822.500C845.800 816 846 810 847.200 803.750C848 799.500 849 797.500 851.900 796.250C855 795 858 794.500 861.250 794.400C875 794.100 889 794.800 902.500 794.400C909 794.200 915 793 921.250 791.600C926 790.500 931 789.100 936.250 789.300C943 789.500 949 790.500 955 793.400C961 796.300 965.500 799 968.100 802.800C970.800 806.800 971.900 811 971.900 815C971.900 820 970.800 824.500 968.100 828.100C965.500 831.600 962 834.500 956.900 835.600C951 836.500 944 836.200 938.100 836C930 835.700 922 835.500 915.600 834.700C907 833.600 899 831.600 891.250 831C882 830.300 874 830.200 865 830.400C857 830.600 850 831 842.500 831.500"/>
</svg>
<div style="position:absolute;left:0;top:869.800px;width:1262px;height:76px;background:#f7f9f7"></div>
<div class="t" id="add" style="left:106px;top:897.500px;font-size:21.8px;letter-spacing:0.5px;color:#0b57d0;-webkit-text-stroke:0.750px #0b57d0">Add</div>
<svg style="left:0;top:0" width="400" height="1019" viewBox="0 0 400 1019"><rect x="192.300" y="886.900" width="84.600" height="44.200" rx="6.500" fill="#f8faf8" stroke="#646766" stroke-width="1.800"/></svg>
<div class="t" id="n1000" style="left:209.500px;top:898.300px;font-size:21.8px;letter-spacing:0.8px;-webkit-text-stroke:0.500px;color:#3c3c3c">1000</div>
<div class="t" id="more" style="left:290px;top:901.500px;font-size:21.8px;letter-spacing:-0.05px;-webkit-text-stroke:0.200px;color:#444746">more rows at the bottom</div>
<div class="ln" style="left:0;top:945.500px;width:1278px;height:1.200px;background:#e3e3e3"></div>
<!-- h scrollbar row -->
<div style="position:absolute;left:0;top:946.500px;width:458px;height:17.500px;background:#f8f9fa"></div>
<div style="position:absolute;left:458px;top:946.500px;width:7.500px;height:17.500px;background:#dadfe8"></div>
<div style="position:absolute;left:465.500px;top:946.500px;width:749px;height:17.500px;background:#fff"></div>
<div style="position:absolute;left:954px;top:948.500px;width:95px;height:12.500px;border-radius:6.500px;background:#dadada"></div>
<div style="position:absolute;left:1214.500px;top:946.500px;width:63.500px;height:17.500px;background:#f8f9fa"></div>
<div class="ln" style="left:1214.500px;top:946.500px;width:1px;height:17.500px"></div>
<div class="ln" style="left:1238px;top:946.500px;width:1px;height:17.500px"></div>
<div class="ln" style="left:1261.500px;top:946.500px;width:1px;height:17.500px"></div>
<svg style="left:1223px;top:950.500px" width="6" height="9" viewBox="0 0 6 9"><path d="M6 0v9L0 4.500z" fill="#a0a0a0"/></svg>
<svg style="left:1248px;top:950.500px" width="6" height="9" viewBox="0 0 6 9"><path d="M0 0v9L6 4.500z" fill="#a0a0a0"/></svg>
<div class="ln" style="left:0;top:964px;width:1278px;height:1.200px;background:#e1e1e1"></div>
<!-- v scrollbar -->
<div style="position:absolute;left:1263.500px;top:803.500px;width:13.500px;height:93px;border-radius:7px;background:#dadada"></div>
<div style="position:absolute;left:1262px;top:897.500px;width:16px;height:48px;background:#f8f9fa"></div>
<div class="ln" style="left:1262px;top:897.500px;width:16px;height:1px"></div>
<div class="ln" style="left:1262px;top:921px;width:16px;height:1px;background:#d6dff0"></div>
<div class="ln" style="left:1261.500px;top:869px;width:1px;height:77px"></div>
<svg style="left:1265.500px;top:906px" width="9" height="6" viewBox="0 0 9 6"><path d="M0 6h9L4.500 0z" fill="#a0a0a0"/></svg>
<svg style="left:1265.500px;top:931px" width="9" height="6" viewBox="0 0 9 6"><path d="M0 0h9L4.500 6z" fill="#a0a0a0"/></svg>
<div style="position:absolute;left:0;top:965px;width:1278px;height:54px;background:#f9fbfd"></div>
<div style="position:absolute;left:138px;top:965px;width:209px;height:54px;background:#e1e9f7"></div>
<div style="position:absolute;left:0;top:985px;width:1278px;height:34px;background:linear-gradient(180deg,rgba(0,0,0,0) 0,rgba(0,0,0,0.065) 100%);-webkit-mask-image:linear-gradient(90deg,#000 0,#000 600px,transparent 1150px);mask-image:linear-gradient(90deg,#000 0,#000 600px,transparent 1150px)"></div>
<svg style="left:80px;top:986.500px" width="21" height="15" viewBox="0 0 21 15" stroke="#444746" stroke-width="2.200"><path d="M0 1.500h21M0 7.500h21M0 13.500h21"/></svg>
<div class="t" id="tab1" style="left:156.500px;top:983.5px;font-size:21.8px;color:#0b57d0;font-weight:bold;letter-spacing:0.400px">Class of 2026</div>
<svg style="left:318px;top:991.500px" width="11.500" height="6" viewBox="0 0 12 6"><path d="M0 0h12L6 6z" fill="#0b57d0"/></svg>
<div class="t" id="tab2" style="left:366px;top:983.5px;font-size:21.8px;color:#444746;letter-spacing:0.470px">Class of 2027</div>
<svg style="left:523px;top:991.500px" width="11.500" height="6" viewBox="0 0 12 6"><path d="M0 0h12L6 6z" fill="#444746"/></svg>
<div class="t" id="tab3" style="left:572.500px;top:983.5px;font-size:21.8px;color:#444746;letter-spacing:0.470px">Class of 2028</div>
<svg style="left:730px;top:991.500px" width="11.500" height="6" viewBox="0 0 12 6"><path d="M0 0h12L6 6z" fill="#444746"/></svg>
<div class="t" id="tab4" style="left:779px;top:983.5px;font-size:21.8px;color:#444746;letter-spacing:0.270px">Class of</div>
<div style="position:absolute;left:871px;top:978px;width:1.500px;height:29px;background:#c4c7c5"></div>
<svg style="left:900px;top:986.500px" width="12" height="16" viewBox="0 0 12 16" fill="none" stroke="#c0c3c2" stroke-width="2.200"><path d="M10 1.500L2.500 8L10 14.500"/></svg>
<svg style="left:959.500px;top:986.500px" width="12" height="16" viewBox="0 0 12 16" fill="none" stroke="#444746" stroke-width="2.200"><path d="M2 1.500L9.500 8L2 14.500"/></svg>
<svg style="left:1230.500px;top:987.500px" width="12" height="16" viewBox="0 0 12 16" fill="none" stroke="#444746" stroke-width="2.400"><path d="M10 1.500L2.500 8L10 14.500"/></svg>
</div>
<div id="edge"></div>
</body></html>
